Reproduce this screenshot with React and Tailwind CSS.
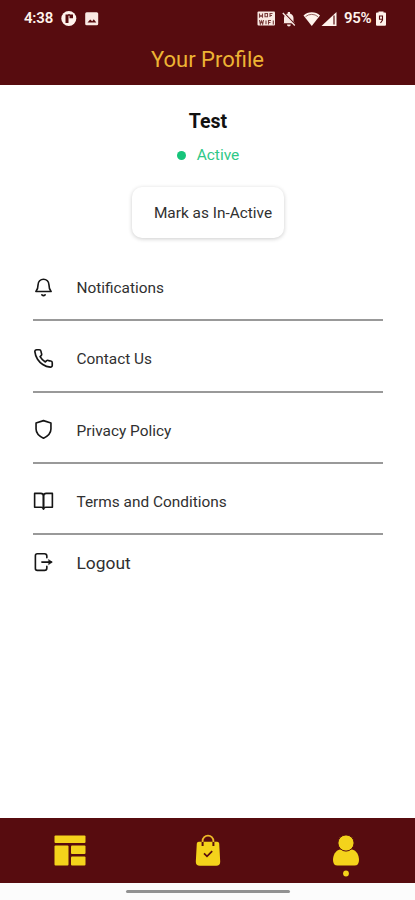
import React from "react";

const stroke = {
  fill: "none",
  stroke: "currentColor",
  strokeWidth: 1.7,
  strokeLinecap: "round",
  strokeLinejoin: "round",
};

function BellIcon() {
  return (
    <svg width="21" height="21" viewBox="0 0 22 22" {...stroke}>
      <path d="M5.300 8a5.700 5.700 0 0 1 11.400 0c0 4 .8 5.600 2.300 7.200H3c1.500-1.600 2.300-3.200 2.300-7.200z" />
      <path d="M9.300 18.700q1.700 1.500 3.400 0" />
    </svg>
  );
}

function PhoneIcon() {
  return (
    <svg width="21" height="21" viewBox="0 0 24 24" {...stroke} strokeWidth="1.900">
      <path d="M22 16.920v3a2 2 0 0 1-2.180 2 19.790 19.790 0 0 1-8.630-3.070 19.500 19.500 0 0 1-6-6 19.790 19.790 0 0 1-3.070-8.670A2 2 0 0 1 4.110 2h3a2 2 0 0 1 2 1.720 12.840 12.840 0 0 0 .7 2.810 2 2 0 0 1-.45 2.110L8.090 9.910a16 16 0 0 0 6 6l1.270-1.270a2 2 0 0 1 2.110-.45 12.840 12.840 0 0 0 2.810.7A2 2 0 0 1 22 16.920z" />
    </svg>
  );
}

function ShieldIcon() {
  return (
    <svg width="21" height="21" viewBox="0 0 22 22" {...stroke}>
      <path d="M11 1.700 L18.800 4.300 V10.500 C18.800 15 15.500 18 11 20.200 C6.500 18 3.200 15 3.200 10.500 V4.300 Z" />
    </svg>
  );
}

function BookIcon() {
  return (
    <svg width="21" height="21" viewBox="0 0 22 22" {...stroke}>
      <path d="M1.700 2.500h6.500a2.800 2.800 0 0 1 2.800 2.600v13.800a2.500 2.500 0 0 0-2.500-1.900H1.700z" />
      <path d="M20.300 2.500h-6.500a2.800 2.800 0 0 0-2.800 2.600v13.800a2.500 2.500 0 0 1 2.500-1.900h6.800z" />
    </svg>
  );
}

function LogoutIcon() {
  return (
    <svg width="21" height="21" viewBox="0 0 22 22" {...stroke}>
      <path d="M14.500 6V4.300a2.500 2.500 0 0 0-2.500-2.500H4.500A2 2 0 0 0 2.500 3.800v13.500a2 2 0 0 0 2 2h7.500a2.500 2.500 0 0 0 2.500-2.500V15" />
      <path d="M9.300 10.600H19" />
      <path d="M16.500 8 20.300 10.600 16.500 13.200z" fill="currentColor" strokeWidth="0.500" />
    </svg>
  );
}

function StatusBar() {
  return (
    <div className="flex h-[37px] items-center pl-6 pr-[28px] text-[15px] font-semibold text-[#fff3ec]">
      <span className="w-[37px] tracking-[-0.200px]">4:38</span>
      <svg width="40" height="16" viewBox="0 0 40 16">
        <circle cx="7.800" cy="7.500" r="7.500" fill="#fff3ec" />
        <path d="M4.500 3.500h3v8.500h-3z M8.500 3.500H12v3.800H8.500z" fill="#570c0f" />
        <path d="M7 4h2" stroke="#570c0f" strokeWidth="1.500" />
        <rect x="24.200" y="1.300" width="13" height="13" rx="1.500" fill="#f9e9e3" />
        <path d="M26.500 11.500l2.700-3 2 1.800 1.600-2 2.500 3.200z" fill="#570c0f" />
      </svg>
      <svg className="ml-auto" width="83" height="18" viewBox="0 0 83 18">
        <rect x="0.500" y="1.500" width="17.500" height="14" rx="1" fill="#f9e9e3" />
        <g fill="none" stroke="#7a3b3a" strokeWidth="1.100">
          <path d="M2.500 3.500v3.500l1.500-1.500 1.500 1.500V3.500M8 3.500h2.500v3.200H8zM13 7V3.500h2.500M13 5.500h2" />
          <path d="M2.500 10l.8 4 1.200-3 1.200 3 .8-4M9 10.500v3.800M11.500 14.500v-4h2.500M11.500 12.500h2M16.300 10.500v4" />
        </g>
        <g fill="#f9e9e3" transform="translate(-1 -0.500)">
          <path d="M28 13.500V8.500a5 5 0 0 1 3.800-4.600V2.500h2.200v1.400a5 5 0 0 1 3.500 4.600v3.700l1.500 1.600H27z" />
          <path d="M31 15h3.800a1.900 1.900 0 0 1-3.800 0z" />
        </g>
        <path d="M27 3 38.500 15" stroke="#570c0f" strokeWidth="1.600" />
        <path d="M25.800 3 37.800 15.500" stroke="#f9e9e3" strokeWidth="1.300" />
        <path d="M46.500 5.500a12 12 0 0 1 16.500 0L54.750 16z" fill="#fff3ec" />
        <path d="M48.500 6.700a9.500 9.500 0 0 1 12.500 0" stroke="#8c5350" strokeWidth="0.900" fill="none" />
        <path d="M64.500 16 79.500 2v14z" fill="#fff3ec" />
        <path d="M77 5.500v9" stroke="#570c0f" strokeWidth="1.200" />
      </svg>
      <span className="ml-[4px] w-[31px] whitespace-nowrap tracking-[-0.350px]">95%</span>
      <svg width="12" height="16" viewBox="0 0 12 16">
        <path d="M3.500 1.500V.5h5v1H10a1 1 0 0 1 1 1V13.700a1 1 0 0 1-1 1H2a1 1 0 0 1-1-1V2.500a1 1 0 0 1 1-1z" fill="#fff3ec" />
        <path d="M7.500 8.200H4.500V5h3v4L5.500 12" fill="none" stroke="#570c0f" strokeWidth="1.100" />
      </svg>
    </div>
  );
}

const items = [
  { label: "Notifications", Icon: BellIcon },
  { label: "Contact Us", Icon: PhoneIcon },
  { label: "Privacy Policy", Icon: ShieldIcon },
  { label: "Terms and Conditions", Icon: BookIcon },
];

export default function App() {
  return (
    <div className="flex h-[900px] w-[415px] flex-col overflow-hidden bg-white font-['Roboto',sans-serif] text-[#303030]">
      <header className="h-[85px] shrink-0 bg-[#570c0f]">
        <StatusBar />
        <h1 className="text-center text-[22px] leading-[45px] text-[#edb434]">Your Profile</h1>
      </header>

      <main className="flex flex-1 flex-col items-center">
        <h2 className="mt-[25px] pl-px text-[19.500px] font-bold leading-6 text-[#111]">Test</h2>
        <div className="mt-[12px] flex h-5 items-center gap-[11px] pl-px text-[15.500px] text-[#2fc887]">
          <span className="mb-[2px] size-[9px] rounded-full bg-[#16c47a]" />
          Active
        </div>
        <button className="mt-[21px] h-[51px] w-[152px] rounded-[10px] bg-white pl-[11px] pt-[3px] text-[15.400px] whitespace-nowrap shadow-[0_1px_4px_rgba(0,0,0,0.2)]">
          Mark as In-Active
        </button>

        <nav className="mt-[12px] w-[351px] pl-px">
          {items.map(({ label, Icon }) => (
            <div key={label} className="flex h-[71.300px] items-center border-b-2 border-[#999999] pt-[7px]">
              <span className="w-[43.500px] pb-[2px] text-[#151515]">
                <Icon />
              </span>
              <span className="pt-px text-[15.400px]">{label}</span>
            </div>
          ))}
          <div className="flex h-[56px] items-center">
            <span className="w-[43.500px] pb-[2px] text-[#151515]">
              <LogoutIcon />
            </span>
            <span className="text-[17.400px]">Logout</span>
          </div>
        </nav>
      </main>

      <footer className="shrink-0">
        <div className="grid h-[65px] grid-cols-3 justify-items-center bg-[#570c0f] pt-[15px] text-[#f4d31b]">
          <svg className="ml-[2px]" width="34" height="34" viewBox="0 0 34 34" fill="currentColor">
            <rect x="1.500" y="2.500" width="31" height="7.500" rx="1" />
            <rect x="1.500" y="12.500" width="14" height="20" rx="1" />
            <rect x="18" y="12.500" width="14.500" height="8.500" rx="1" />
            <rect x="18" y="23.500" width="14.500" height="9" rx="1" />
          </svg>
          <svg className="ml-px" width="34" height="34" viewBox="0 0 34 34" fill="none">
            <path d="M5.800 10.500a2 2 0 0 1 2-1.800h18.400a2 2 0 0 1 2 1.800l1 18.300a4 4 0 0 1-4 4H8.800a4 4 0 0 1-4-4z" fill="currentColor" />
            <path d="M11.600 13V8.500a5.400 5.400 0 0 1 10.800 0V13" stroke="#570c0f" strokeWidth="2" />
            <path d="M11.600 9V8a5.400 5.400 0 0 1 10.800 0v1" stroke="#edb928" strokeWidth="1.800" />
            <path d="m13 20.300 3 3 5.200-5.200" stroke="#570c0f" strokeWidth="1.700" />
          </svg>
          <svg width="34" height="46" viewBox="0 0 34 46" fill="currentColor">
            <path d="M11 16.500C6.500 17.500 4 22 4 27q0 5.500 4.500 5.500h17Q30 32.500 30 27c0-5-2.500-9.500-7-10.500z" />
            <circle cx="17" cy="10" r="8.100" stroke="#570c0f" strokeWidth="1" />
            <circle cx="17" cy="40.500" r="2.900" />
          </svg>
        </div>
        <div className="flex h-[17px] items-center justify-center bg-[#fcfcfc]">
          <span className="h-[3px] w-[164px] rounded-full bg-[#929292]" />
        </div>
      </footer>
    </div>
  );
}
